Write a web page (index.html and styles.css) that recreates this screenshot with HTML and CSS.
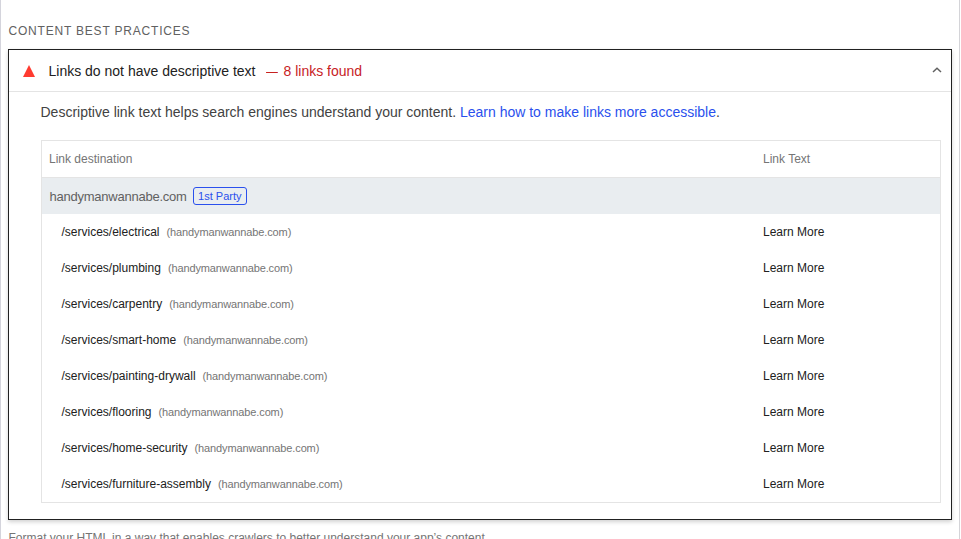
FILE: index.html
```html
<!DOCTYPE html>
<html lang="en">
<head>
<meta charset="utf-8">
<title>Content best practices</title>
<link rel="stylesheet" href="styles.css">
</head>
<body>
<main class="report">
  <h2 class="group-title">Content Best Practices</h2>
  <section class="audit">
    <header class="audit-header">
      <svg class="fail-icon" width="12" height="12" viewBox="0 0 12 12"><path d="M6 0L12 12H0Z" fill="#ff3b30"/></svg>
      <span class="audit-title">Links do not have descriptive text</span>
      <span class="audit-dash">—</span>
      <span class="audit-count">8 links found</span>
      <svg class="chevron" width="10" height="6" viewBox="0 0 10 6"><path d="M1 5L5 1.2L9 5" fill="none" stroke="#616161" stroke-width="1.5"/></svg>
    </header>
    <p class="description"><span class="description-text">Descriptive link text helps search engines understand your content. </span><a class="learn">Learn how to make links more accessible</a>.</p>
    <div class="table">
      <div class="row head"><span class="destination">Link destination</span><span class="link-text">Link Text</span></div>
      <div class="row entity"><span class="entity-name">handymanwannabe.com</span><span class="badge">1st Party</span></div>
      <div class="row item"><div class="destination"><span class="path">/services/electrical</span><span class="host">(handymanwannabe.com)</span></div><span class="link-text">Learn More</span></div>
      <div class="row item"><div class="destination"><span class="path">/services/plumbing</span><span class="host">(handymanwannabe.com)</span></div><span class="link-text">Learn More</span></div>
      <div class="row item"><div class="destination"><span class="path">/services/carpentry</span><span class="host">(handymanwannabe.com)</span></div><span class="link-text">Learn More</span></div>
      <div class="row item"><div class="destination"><span class="path">/services/smart-home</span><span class="host">(handymanwannabe.com)</span></div><span class="link-text">Learn More</span></div>
      <div class="row item"><div class="destination"><span class="path">/services/painting-drywall</span><span class="host">(handymanwannabe.com)</span></div><span class="link-text">Learn More</span></div>
      <div class="row item"><div class="destination"><span class="path">/services/flooring</span><span class="host">(handymanwannabe.com)</span></div><span class="link-text">Learn More</span></div>
      <div class="row item"><div class="destination"><span class="path">/services/home-security</span><span class="host">(handymanwannabe.com)</span></div><span class="link-text">Learn More</span></div>
      <div class="row item"><div class="destination"><span class="path">/services/furniture-assembly</span><span class="host">(handymanwannabe.com)</span></div><span class="link-text">Learn More</span></div>
    </div>
  </section>
  <p class="footnote">Format your HTML in a way that enables crawlers to better understand your app’s content.</p>
</main>
</body>
</html>
```
FILE: styles.css
```css
* { box-sizing: border-box; }
body {
  margin: 0;
  height: 539px;
  overflow: hidden;
  background: #fff;
  color: #212121;
  font-family: "Liberation Sans", Arial, sans-serif;
  font-size: 14px;
}
.report {
  width: 960px;
  height: 539px;
  overflow: hidden;
  padding: 21px 7px 0;
  border-left: 1px solid #d4d4dc;
  border-right: 1px solid #d4d4d8;
}
.group-title {
  margin: 0 0 8px;
  padding-left: .5px;
  height: 20px;
  line-height: 20px;
  font-size: 12px;
  font-weight: 400;
  letter-spacing: .8px;
  text-transform: uppercase;
  color: #616161;
}
.audit {
  height: 471px;
  border: 1px solid #212121;
  box-shadow: 0 2px 4px rgba(0, 0, 0, .18);
}
.audit-header {
  display: flex;
  align-items: center;
  height: 42px;
  padding: 0 9px 0 14px;
  border-bottom: 1px solid #e4e4e4;
  white-space: nowrap;
}
.fail-icon { margin-right: 13.5px; }
.audit-title { margin-right: 10px; }
.audit-dash { width: 12px; margin-right: 6px; color: #c7221f; transform: scaleX(.85); transform-origin: left; }
.audit-count { color: #c7221f; }
.chevron { margin-left: auto; transform: translateY(-1px); }
.description {
  margin: 0 0 0 31.5px;
  height: 48px;
  line-height: 41px;
  color: #424242;
  white-space: nowrap;
}
.learn { color: #2a50ed; }
.table {
  width: 900px;
  height: 363px;
  margin-left: 32px;
  border: 1px solid #e4e4e4;
  font-size: 12px;
}
.row { display: flex; align-items: center; height: 36px; }
.head { height: 37px; padding-left: 7px; border-bottom: 1px solid #e4e4e4; color: #757575; }
.head .destination { width: 714px; }
.entity { padding-left: 7.5px; background: #e9edf0; }
.entity-name { margin-right: 6.5px; font-size: 13px; letter-spacing: -.24px; color: #616161; }
.badge {
  height: 18px;
  padding: 0 4px;
  border: 1px solid #2a50ed;
  border-radius: 3px;
  font-size: 11px;
  line-height: 17px;
  color: #2a50ed;
}
.item { padding-left: 19.5px; }
.item .destination { display: flex; align-items: center; width: 701.5px; }
.path { margin-right: 7px; }
.host { font-size: 11px; letter-spacing: -.12px; color: #757575; }
.footnote { margin: 8px 0 0; padding-left: .5px; font-size: 12px; line-height: 20px; color: #757575; white-space: nowrap; }
```
